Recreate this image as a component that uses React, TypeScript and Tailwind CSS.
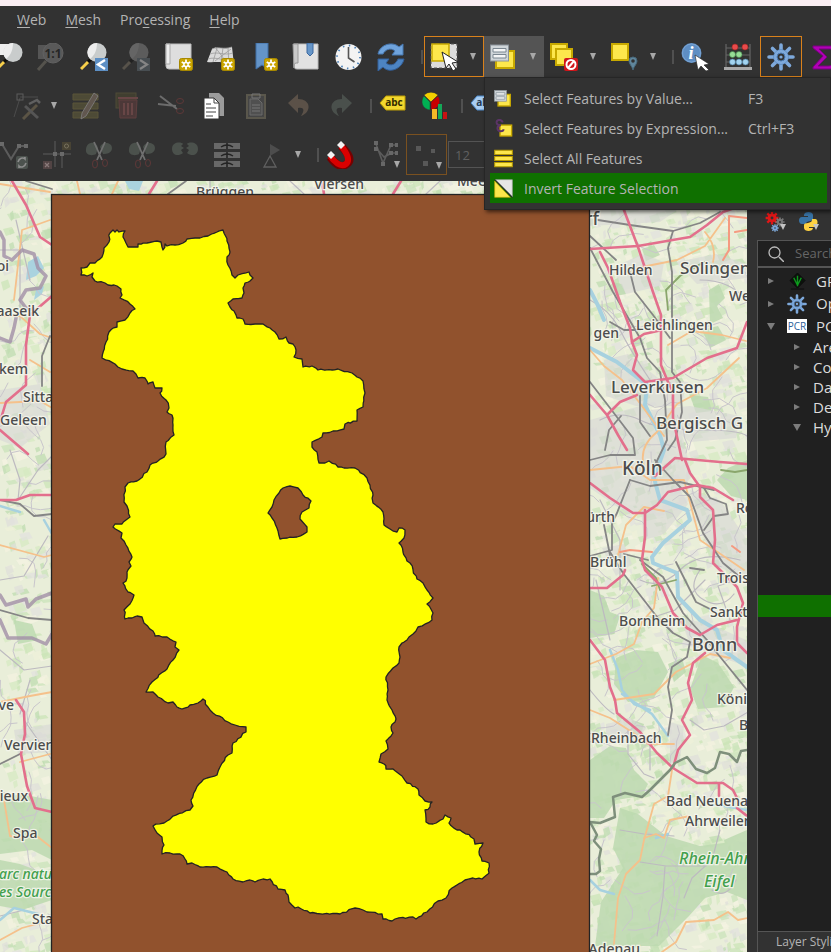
import type { ReactNode } from "react";

const ui = "font-['Open_Sans','Noto_Sans',sans-serif]";

/* ---------- icon parts ---------- */

function Icon({ children, size = 28 }: { children: ReactNode; size?: number }) {
  return (
    <svg width={size} height={size} viewBox="0 0 28 28" className="shrink-0" aria-hidden="true">
      {children}
    </svg>
  );
}

function Star({ x = 14, y = 15 }: { x?: number; y?: number }) {
  return (
    <g transform={`translate(${x} ${y})`}>
      <rect x="0.5" y="0.5" width="13" height="12" rx="2" fill="#c9a400" stroke="#a78800" />
      <path d="M7 1.500v10M2.700 4l8.600 5M11.300 4L2.700 9" stroke="#fff" strokeWidth="1.800" />
      <circle cx="7" cy="6.500" r="2.800" fill="#fff" />
      <circle cx="7" cy="6.500" r="1.300" fill="#c9a400" />
    </g>
  );
}

function Lens({ dim = false }: { dim?: boolean }) {
  return (
    <g>
      <path d="M10 17L1 26" stroke={dim ? "#57524a" : "#f7cf4a"} strokeWidth="3" />
      <path d="M11 16l-3 3" stroke={dim ? "#222" : "#0c0c0c"} strokeWidth="3.500" />
      <circle cx="17" cy="9.500" r="9.500" fill={dim ? "#5c5c5c" : "#c9cccc"} />
      <path d="M17 0a9.500 9.500 0 0 0-7 16c4-3 7-8 7-16z" fill={dim ? "#666" : "#f1f1f1"} opacity="0.900" />
    </g>
  );
}

const icons: Record<string, ReactNode> = {
  zoomLayer: (
    <>
      <rect x="2" y="1" width="12" height="11" fill="#eee" />
      <g transform="translate(1 0)">
        <Lens />
      </g>
    </>
  ),
  zoomNative: (
    <>
      <rect x="1" y="2" width="13" height="14" fill="#565656" />
      <path d="M9 18L1 27" stroke="#55534d" strokeWidth="3" />
      <circle cx="16" cy="10" r="10" fill="#595959" stroke="#626262" />
      <text x="16" y="15" textAnchor="middle" fontSize="12" fontWeight="700" fill="#262626" className="font-['Open_Sans',sans-serif]">
        1:1
      </text>
    </>
  ),
  zoomLast: (
    <>
      <Lens />
      <rect x="15" y="15" width="13" height="13" fill="#5d8fc4" />
      <path d="M25 17l-7 4.500 7 4.500" fill="none" stroke="#fff" strokeWidth="2.400" />
    </>
  ),
  zoomNext: (
    <>
      <Lens dim />
      <rect x="15" y="15" width="13" height="13" fill="#484e52" />
      <path d="M18 17l7 4.500-7 4.500" fill="none" stroke="#858585" strokeWidth="2.200" />
    </>
  ),
  newLayout: (
    <>
      <path d="M2 1h24v25H4a3 3 0 0 1-3-3V1z" fill="#dedede" stroke="#bdbdbd" />
      <path d="M1 1h4v20H1z" fill="#eee" stroke="#aaa" />
      <Star />
    </>
  ),
  newMap3d: (
    <>
      <path d="M5 6c6-3 11 1 20-2l2 18-8 0C14 17 8 20 0 19z" fill="#dadada" />
      <path d="M10 5L6 19M16 5l-2 14M21 5l1 17M3 11c8-3 14 2 23-1M1 16c8-3 16 3 25 0M5 6c6-3 11 1 20-2M8 4l12 16M24 6L8 18" fill="none" stroke="#9b9b9b" strokeWidth="0.800" />
      <Star />
    </>
  ),
  newBookmark: (
    <>
      <path d="M6 0h12v26l-6-4-6 4z" fill="#6494c8" stroke="#3f6ea6" />
      <Star x={14} y={15} />
    </>
  ),
  bookmarks: (
    <>
      <path d="M2 1h24v25H5c-2 0-3-1-3-3z" fill="#e2e2e2" stroke="#bbb" />
      <path d="M1 1h5v19H4c-2 0-2 3-2 5z" fill="#c9c9c9" stroke="#999" />
      <path d="M15 0h6v10l-3 3-3-3z" fill="#6796c8" stroke="#3c69a0" />
    </>
  ),
  clock: (
    <>
      <circle cx="13.500" cy="14" r="13" fill="#f3f3f3" />
      <circle cx="13.500" cy="14" r="11.500" fill="none" stroke="#4b80b8" strokeWidth="1.800" strokeDasharray="1.500 4.520" />
      <path d="M13.500 4v11l6 4" fill="none" stroke="#555" strokeWidth="1.600" />
    </>
  ),
  refresh: (
    <>
      <path d="M1 11C3 1 16-2 22 4l4-3v11H15l3-4c-5-4-10-1-12 3z" fill="#6fa3dc" stroke="#4778b2" />
      <path d="M27 16c-2 10-15 15-21 8l-5 4V16h11l-3 4c5 4 10 1 12-4z" fill="#4d84c2" stroke="#325f99" />
    </>
  ),
  selectRect: (
    <>
      <rect x="1" y="1" width="26" height="24" fill="#dcdcdc" stroke="#555" strokeDasharray="3 2" />
      <rect x="2" y="1" width="17" height="17" fill="#fde74c" stroke="#c8a900" strokeWidth="1.500" />
      <path d="M12 9l16 10-6 1 4 6-3 2-4-7-3 4z" fill="#fff" stroke="#222" />
    </>
  ),
  selectForm: (
    <>
      <rect x="6" y="8" width="18" height="17" fill="#fde74c" stroke="#c8a900" strokeWidth="2" />
      <rect x="0.5" y="2" width="18" height="16" fill="#cfd5d9" stroke="#8a9299" />
      <path d="M3 5.500h13v3.500H3zM3 11.500h13v3.500H3z" fill="#f4f5f6" stroke="#7b8791" />
    </>
  ),
  deselect: (
    <>
      <rect x="1" y="1" width="16" height="15" fill="#fde74c" stroke="#c8a900" strokeWidth="2" />
      <rect x="6" y="6" width="16" height="16" fill="#fde74c" stroke="#c8a900" strokeWidth="2" />
      <rect x="14" y="15" width="14" height="13" rx="2" fill="#d0161b" />
      <circle cx="21" cy="21.500" r="4.500" fill="#d0161b" stroke="#fff" strokeWidth="2" />
      <path d="M18 25l6-7" stroke="#fff" strokeWidth="2" />
    </>
  ),
  selectLocation: (
    <>
      <rect x="2" y="1" width="16" height="16" fill="#fde74c" stroke="#c8a900" strokeWidth="2" />
      <path d="M23 27c-1-4-4-6-4-9a4 4 0 0 1 8 0c0 3-3 5-4 9z" fill="#60869c" stroke="#48697c" />
      <circle cx="23" cy="18" r="1.800" fill="#323232" />
    </>
  ),
  identify: (
    <>
      <circle cx="10.500" cy="10" r="10" fill="#5e8ec3" />
      <circle cx="10.500" cy="10" r="9" fill="none" stroke="#79a4d3" />
      <text x="10" y="16" textAnchor="middle" fontSize="18" fontWeight="700" fontStyle="italic" fill="#fff" className="font-['Liberation_Serif',serif]">
        i
      </text>
      <path d="M14 12l14 9-5 1 5 5-3 1-5-5-3 4z" fill="#fff" stroke="#222" strokeWidth="0.600" />
    </>
  ),
  abacus: (
    <>
      <path d="M2 1v23M26 1v23M2 5h24M2 12h24M2 19h24" stroke="#666" strokeWidth="1.200" />
      <rect x="0" y="24" width="28" height="3" fill="#a9a9a9" />
      <g fill="#e84b4b" stroke="#a32020" strokeWidth="0.600">
        <circle cx="11" cy="4" r="3" /><circle cx="21" cy="4" r="3" />
      </g>
      <g fill="#97dc97" stroke="#428a49" strokeWidth="0.600">
        <circle cx="8.500" cy="11.500" r="3" /><circle cx="15" cy="11.500" r="3" />
      </g>
      <g fill="#a2d3ef" stroke="#47799c" strokeWidth="0.600">
        <circle cx="8.500" cy="19" r="3" /><circle cx="15" cy="19" r="3" /><circle cx="21.500" cy="19" r="3" />
      </g>
    </>
  ),
  gear: (
    <>
      <g stroke="#7ea9db" strokeWidth="3.600" strokeLinecap="round">
        <path d="M14 2v24M2 14h24M5.500 5.500l17 17M22.500 5.500l-17 17" />
      </g>
      <circle cx="14" cy="14" r="7.500" fill="#7ea9db" stroke="#4c7cb4" strokeWidth="0.500" />
      <circle cx="14" cy="14" r="4" fill="#323232" stroke="#4c7cb4" strokeWidth="1" />
      <circle cx="14" cy="14" r="1.600" fill="#7ea9db" />
    </>
  ),
  sigma: <path d="M3 3h22v6h-2c-1-3-2-3-5-3H9l8 8-9 9h10c3 0 5-1 6-4h2l-2 7H3v-2l10-11L3 5z" fill="#b100b5" stroke="#780080" />,

  /* digitising row */
  vertexTool: (
    <>
      <path d="M7 6L1 25M7 5h18" stroke="#4c4c4c" fill="none" />
      <rect x="4" y="2" width="6" height="6" fill="none" stroke="#5c5c5c" />
      <path d="M10 27l14-14" stroke="#5b5445" strokeWidth="3" />
      <path d="M12 14l13 12" stroke="#555" strokeWidth="3" />
      <path d="M16 12l8-4 3 3" stroke="#606060" strokeWidth="2.500" fill="none" />
    </>
  ),
  editing: (
    <>
      <path d="M1 2h25v6H1zM1 11h25v6H1zM1 20h25v6H1z" fill="#4d4a36" stroke="#5a5539" />
      <path d="M22 1l4 3-12 20-5 3 1-6z" fill="#61574f" stroke="#808080" strokeWidth="0.800" />
    </>
  ),
  trash: (
    <>
      <rect x="1" y="1" width="20" height="15" fill="#403e30" stroke="#4f4b37" />
      <path d="M4 8h18l-1 18H5z" fill="#4c3838" stroke="#5e3f3f" />
      <path d="M3 6h20M9 11v12M13 11v12M17 11v12" stroke="#684646" strokeWidth="2" />
    </>
  ),
  cut: (
    <>
      <path d="M1 12l18 2M3 4l17 13" stroke="#6c6c6c" strokeWidth="2" />
      <ellipse cx="23" cy="9" rx="3.500" ry="2.500" fill="none" stroke="#5e3838" />
      <ellipse cx="23" cy="19" rx="3.500" ry="2.500" fill="none" stroke="#5e3838" />
    </>
  ),
  copy: (
    <>
      <path d="M9 1h10l5 5v18H9z" fill="#9b9b9b" />
      <path d="M4 6h10l5 5v16H4z" fill="#fff" stroke="#333" />
      <path d="M14 6v5h5M6 12h5M6 16h10M6 20h10M6 24h7" fill="none" stroke="#444" />
    </>
  ),
  paste: (
    <>
      <rect x="5" y="3" width="18" height="23" fill="#454545" stroke="#5a574c" strokeWidth="2" />
      <path d="M8 7h8l4 4v12H8z" fill="#505050" stroke="#6b6b6b" />
      <path d="M10 13h8M10 16h8M10 19h8M10 2h8v4h-8z" fill="none" stroke="#777" />
    </>
  ),
  undo: <path d="M3 11l10-9v5c13 0 14 13 3 17 4-6 3-9-3-8v5z" fill="#5b5148" />,
  redo: <path d="M25 11L15 2v5C2 7 1 20 12 24c-4-6-3-9 3-8v5z" fill="#4a504c" />,
  label: (
    <>
      <path d="M1 11l6-7h19v14H7z" fill="#f2d72e" stroke="#bd9d05" />
      <text x="15" y="14" textAnchor="middle" fontSize="10" fontWeight="700" fill="#332b00" className="font-['Open_Sans',sans-serif]">
        abc
      </text>
    </>
  ),
  labelBlue: (
    <>
      <path d="M1 11l6-7h19v14H7z" fill="#a9cef4" stroke="#4c88c8" />
      <text x="15" y="14" textAnchor="middle" fontSize="10" fontWeight="700" fill="#263a55" className="font-['Open_Sans',sans-serif]">
        abc
      </text>
    </>
  ),
  diagram: (
    <>
      <path d="M10 10L3 3a10 10 0 0 1 14 0z" fill="#f3cf00" stroke="#333" strokeWidth="0.500" />
      <path d="M9 10L3 4c-4 5-2 13 6 14z" fill="#00b153" stroke="#333" strokeWidth="0.500" />
      <path d="M10 10l7-6c4 5 1 13-7 14z" fill="#c80000" stroke="#333" strokeWidth="0.500" />
      <path d="M11 17h5v10h-5z" fill="#f4ba27" /><path d="M17 12h4v15h-4z" fill="#14a858" /><path d="M22 20h4v7h-4z" fill="#c81313" />
    </>
  ),

  /* advanced digitising row */
  nodes: (
    <>
      <path d="M2 3l9 15 8-13h8" stroke="#5c5c5c" strokeWidth="2" fill="none" />
      <path d="M0 1h4v4H0zM17 3h4v4h-4zM24 3h4v4h-4z" fill="#6a6a6a" />
      <rect x="16" y="15" width="12" height="13" rx="2" fill="#4c524e" />
      <path d="M18 21c1-4 5-5 7-3v-2M26 22c-1 4-5 5-7 3v2" stroke="#8d8d8d" fill="none" strokeWidth="1.600" />
    </>
  ),
  trim: (
    <>
      <path d="M0 13h28M12 0v26M19 13v14" stroke="#4f4f4f" strokeWidth="1.500" />
      <path d="M10 11h4v4h-4zM17 11h4v4h-4z" fill="#6a6a6a" />
      <rect x="0" y="20" width="9" height="8" fill="#524444" />
      <path d="M2 22l4 4M6 22l-4 4" stroke="#8a7a7a" strokeWidth="1.300" />
      <rect x="19" y="1" width="9" height="8" fill="#484334" />
      <circle cx="23.500" cy="5" r="2" fill="none" stroke="#78725f" />
    </>
  ),
  split: (
    <>
      <path d="M1 8c1-8 11-8 12-1l-2 6C8 15 0 15 1 8zM15 6c2-6 12-5 12 1 0 5-5 6-9 6z" fill="#4b514c" />
      <path d="M9 1l8 18M20 1l-8 18" stroke="#707070" strokeWidth="1.800" />
      <ellipse cx="10" cy="23" rx="2.500" ry="4" fill="none" stroke="#5e3838" /><ellipse cx="20" cy="22" rx="2.500" ry="3.500" fill="none" stroke="#5e3838" />
    </>
  ),
  merge: <path d="M1 8C1 0 11 1 12 3l-2 2 3 2-3 2 2 3c-5 4-11 2-11-4zm26 0c0-8-10-7-11-5l2 2-3 2 3 2-2 3c5 4 11 2 11-4z" fill="#4b514c" />,
  mergeAttributes: (
    <>
      <path d="M1 2h12v6H1zM15 2h12v6H15zM1 11h12v6H1zM15 11h12v6H15zM1 20h12v6H1zM15 20h12v6H15z" fill="#686868" />
      <path d="M8 6q6-4 12 0M8 15q6-4 12 0M8 24q6-4 12 0" stroke="#242424" fill="none" strokeWidth="1.500" />
    </>
  ),
  rotate: (
    <>
      <path d="M14 3l10 6-10 6z" fill="#4d4d4d" />
      <path d="M14 15l6 11H8z" fill="none" stroke="#606060" strokeWidth="1.300" />
    </>
  ),
  magnet: (
    <>
      <path d="M4 16c7 9 12 11 17 7s2-10-6-18" fill="none" stroke="#750000" strokeWidth="8" />
      <path d="M4 15c7 9 12 11 16 8s2-10-5-18" fill="none" stroke="#d90000" strokeWidth="6" />
      <path d="M1 14l4-4 4 4-4 4zM11 4l4-4 4 4-4 4z" fill="#f2f2f2" />
    </>
  ),
  vertexSnap: (
    <>
      <path d="M3 3l7 19L18 4h7M4 8l7 8 7-4h7M11 16l8-4" stroke="#5c5c5c" fill="none" strokeWidth="1.600" />
      <path d="M1 0h4v4H1zM16 2h4v4h-4zM22 2h3v4h-3zM16 10h4v4h-4zM22 10h3v4h-3zM1 6h4v4H1zM8 21h4v4H8z" fill="#676767" />
    </>
  ),
  points: <path d="M5 5h5v5H5zM20 8h4v4h-4zM12 20h5v5h-5z" fill="#585858" />,

  /* menu icons */
  expression: (
    <>
      <rect x="9" y="9" width="17" height="16" fill="#fde74c" stroke="#c8a900" strokeWidth="2" />
      <path d="M13 5C10-1 3 1 4 6c1 4 6 3 6 3-6 0-7 9 0 9 3 0 4-2 4-3" fill="none" stroke="#5b3466" strokeWidth="3" />
    </>
  ),
  selectAll: <path d="M1 2h26v6H1zM1 11h26v6H1zM1 20h26v6H1z" fill="#fde74c" stroke="#b79a00" strokeWidth="1.500" />,
  invert: (
    <>
      <path d="M2 1h25v25z" fill="#e6e6e6" stroke="#a8a8a8" />
      <path d="M1 3v24h23z" fill="#fde74c" stroke="#c8a900" />
      <path d="M1 1l26 26" stroke="#2b2b2b" strokeWidth="1.500" />
    </>
  ),
};

/* ---------- tool bars ---------- */

function Tool({ icon, label }: { icon: string; label: string }) {
  return (
    <button type="button" aria-label={label} className="flex h-[41px] w-[42px] shrink-0 items-center justify-center">
      <Icon>{icons[icon]}</Icon>
    </button>
  );
}

function Arrow() {
  return (
    <svg width="6" height="7" viewBox="0 0 6 7" className="shrink-0" aria-hidden="true">
      <path d="M0 0h6L3 7z" fill="#a8a8a8" />
    </svg>
  );
}

function Split({ icon, label, frame = "border-transparent" }: { icon: string; label: string; frame?: string }) {
  return (
    <button type="button" aria-label={label} className={`flex h-[41px] w-[60px] shrink-0 items-center justify-between border pr-[7px] pl-[5px] ${frame}`}>
      <Icon>{icons[icon]}</Icon>
      <Arrow />
    </button>
  );
}

function Divider() {
  return <span className="h-3.5 w-[2px] shrink-0 bg-[#505050]" />;
}

const menuItems = [
  { icon: "selectForm", text: "Select Features by Value...", keys: "F3" },
  { icon: "expression", text: "Select Features by Expression...", keys: "Ctrl+F3" },
  { icon: "selectAll", text: "Select All Features", keys: "" },
  { icon: "invert", text: "Invert Feature Selection", keys: "", active: true },
];

function SelectMenu() {
  return (
    <div role="menu" className="absolute top-[41px] left-0 z-20 w-[347px] border border-[#262626] bg-[#323232] pt-[5px] pr-[3px] pb-1.5 pl-[5px] shadow-[2px_2px_4px_rgba(0,0,0,0.6)]">
      {menuItems.map((m) => (
        <button key={m.text} type="button" role="menuitem" className={`flex h-[30px] w-full items-center pl-1 text-left ${m.active ? "bg-[#0f7000]" : ""}`}>
          <span className="w-[30px]">
            <Icon size={19}>{icons[m.icon]}</Icon>
          </span>
          <span className="w-56 whitespace-nowrap">{m.text}</span>
          <span>{m.keys}</span>
        </button>
      ))}
    </div>
  );
}

function Header() {
  return (
    <header className="shrink-0 border-t-[6px] border-[#faeef3] bg-[#323232] pb-1.5">
      <nav className="mb-1 flex h-[26px] items-center gap-[19px] pl-[17px] text-[14px] text-[#b4b4b4]">
        <button type="button"><u className="underline-offset-2">W</u>eb</button>
        <button type="button"><u className="underline-offset-2">M</u>esh</button>
        <button type="button">Pro<u className="underline-offset-2">c</u>essing</button>
        <button type="button"><u className="underline-offset-2">H</u>elp</button>
      </nav>
      <div className="flex flex-col gap-2">
        <div className="flex items-center">
          <div className="-ml-3 flex w-[424px] shrink-0 justify-between">
            <Tool icon="zoomLayer" label="Zoom to layer" />
            <Tool icon="zoomNative" label="Zoom to native resolution" />
            <Tool icon="zoomLast" label="Zoom last" />
            <Tool icon="zoomNext" label="Zoom next" />
            <Tool icon="newLayout" label="New map view" />
            <Tool icon="newMap3d" label="New 3D map view" />
            <Tool icon="newBookmark" label="New spatial bookmark" />
            <Tool icon="bookmarks" label="Show bookmarks" />
            <Tool icon="clock" label="Temporal controller" />
            <Tool icon="refresh" label="Refresh" />
          </div>
          <div className="flex w-3 shrink-0 justify-end pr-px"><Divider /></div>
          <Split icon="selectRect" label="Select features" frame="border-[#d9811b]" />
          <div className="relative shrink-0 text-[14px] text-[#b4b4b4]">
            <Split icon="selectForm" label="Select by value" frame="border-[#545454] bg-[#545454]" />
            <SelectMenu />
          </div>
          <Split icon="deselect" label="Deselect features" />
          <Split icon="selectLocation" label="Select by location" />
          <div className="flex w-2.5 shrink-0 justify-end"><Divider /></div>
          <div className="flex shrink-0 gap-px">
            <Tool icon="identify" label="Identify features" />
            <Tool icon="abacus" label="Field calculator" />
            <div className="border border-[#d9811b]">
              <div className="-m-px"><Tool icon="gear" label="Toolbox" /></div>
            </div>
            <Tool icon="sigma" label="Statistical summary" />
          </div>
        </div>
        <div className="flex items-center pl-1.5">
          <Tool icon="vertexTool" label="Vertex tool" />
          <span className="flex w-[17px] shrink-0 pl-[3px]"><Arrow /></span>
          <div className="flex w-[297px] shrink-0 justify-between">
            <Tool icon="editing" label="Edit attributes" />
            <Tool icon="trash" label="Delete selected" />
            <Tool icon="cut" label="Cut features" />
            <Tool icon="copy" label="Copy features" />
            <Tool icon="paste" label="Paste features" />
            <Tool icon="undo" label="Undo" />
            <Tool icon="redo" label="Redo" />
          </div>
          <div className="flex w-2.5 shrink-0 justify-end"><Divider /></div>
          <Tool icon="label" label="Labeling options" />
          <Tool icon="diagram" label="Diagram options" />
          <div className="flex w-[7px] shrink-0 justify-end"><Divider /></div>
          <Tool icon="labelBlue" label="Pin labels" />
        </div>
        <div className="flex items-center">
          <div className="-ml-[7px] flex w-[298px] shrink-0 justify-between">
            <Tool icon="nodes" label="Rotate feature" />
            <Tool icon="trim" label="Trim or extend" />
            <Tool icon="split" label="Split features" />
            <Tool icon="split" label="Split parts" />
            <Tool icon="merge" label="Merge features" />
            <Tool icon="mergeAttributes" label="Merge attributes" />
            <Tool icon="rotate" label="Rotate symbols" />
          </div>
          <span className="flex w-[26px] shrink-0 pl-1"><Arrow /></span>
          <Divider />
          <Tool icon="magnet" label="Enable snapping" />
          <button type="button" aria-label="Snapping layers" className="flex h-[41px] w-[45px] shrink-0 items-center pl-3">
            <Icon>{icons.vertexSnap}</Icon>
            <span className="-ml-[7px] self-end pb-[7px]"><Arrow /></span>
          </button>
          <button type="button" aria-label="Snapping type" className="flex h-[41px] w-[41px] shrink-0 items-center border border-[#7a5120] pl-1">
            <Icon>{icons.points}</Icon>
            <span className="-ml-[3px] self-end pb-[5px]"><Arrow /></span>
          </button>
          <input aria-label="Snapping tolerance" defaultValue="12" className="ml-px h-[27px] w-20 shrink-0 border border-[#545454] bg-transparent pl-1.5 text-[13px] text-[#606060]" />
        </div>
      </div>
    </header>
  );
}

/* ---------- map ---------- */

function random(seed: number) {
  let s = seed;
  return () => {
    s = (s * 16807) % 2147483647;
    return s / 2147483647;
  };
}

type Pt = [number, number];

function parse(s: string): Pt[] {
  return s.trim().split(/\s+/).map((p) => p.split(",").map(Number) as Pt);
}

/* Adds small wiggles along a boundary so that it reads as a river basin outline. */
function rough(points: string, seed: number): string {
  const r = random(seed);
  const p = parse(points);
  const out: string[] = [];
  p.forEach(([x, y], i) => {
    const [nx, ny] = p[(i + 1) % p.length];
    const n = Math.max(1, Math.round(Math.hypot(nx - x, ny - y) / 3.5));
    for (let k = 0; k < n; k++) {
      const t = k / n;
      const j = k === 0 ? 0 : 1.8;
      out.push(`${(x + (nx - x) * t + (r() - 0.5) * j).toFixed(1)},${(y + (ny - y) * t + (r() - 0.5) * j).toFixed(1)}`);
    }
  });
  return `M${out.join("L")}Z`;
}

const basin = rough(
  `113,230 115,232 117,230 119,232 125,231 123,237 126,243 128,247 133,247 138,247 138,244 147,243 157,241 161,242 162,247 163,250 165,244 167,246 175,245 183,243 187,239 195,238 200,238 208,236 217,232 223,230 225,235 227,241 230,252 227,257 228,265 232,275 235,278 238,275 249,272 250,275 253,278 250,281 245,283 243,288 244,293 242,298 233,299 228,303 230,307 234,311 237,318 243,319 245,324 255,324 263,324 270,328 275,332 279,339 286,337 289,343 293,344 296,350 294,357 302,359 303,367 312,366 318,370 338,369 352,373 357,377 363,381 365,393 363,407 357,410 357,421 345,424 344,429 333,431 323,433 322,437 312,442 312,447 317,452 319,463 325,463 329,461 338,467 355,468 367,478 373,495 373,503 383,512 384,525 390,529 397,532 399,528 405,530 404,538 399,543 403,552 407,561 410,563 417,579 423,583 427,590 433,598 427,604 433,613 432,620 418,627 413,634 409,637 407,640 402,643 399,647 400,657 399,663 393,668 386,677 388,690 387,700 392,710 396,719 391,727 393,733 386,741 388,749 381,754 379,762 384,764 386,769 393,769 402,776 407,783 418,789 419,795 425,801 432,802 430,807 425,810 426,822 433,824 443,819 445,815 451,818 449,823 457,830 460,830 474,839 475,844 483,843 479,852 482,861 489,863 489,873 482,879 473,878 465,880 452,888 446,898 438,901 427,912 416,919 413,917 395,919 392,921 383,919 382,914 367,912 363,910 355,908 340,914 310,913 298,907 295,908 289,902 288,895 285,890 278,889 270,879 263,879 255,882 250,880 243,882 233,879 227,872 217,867 200,867 192,863 187,864 185,859 180,854 170,853 162,854 164,845 162,837 157,833 153,826 167,821 173,816 190,810 193,806 191,800 199,784 207,778 217,775 220,767 228,755 232,753 233,743 246,732 246,727 235,725 228,722 213,713 208,707 203,699 198,703 190,705 182,709 177,707 173,702 168,703 158,697 153,692 146,692 152,682 167,669 173,660 179,650 175,647 176,642 167,637 155,636 153,631 144,623 142,617 137,616 132,618 125,619 124,610 130,604 134,595 128,592 123,583 127,578 127,572 131,566 129,562 132,557 126,545 121,538 122,533 113,527 115,524 122,524 126,520 130,517 127,506 124,502 125,487 128,483 137,481 147,472 150,465 158,461 166,454 166,442 174,435 173,425 172,415 167,412 169,408 166,400 160,393 162,388 155,388 153,382 148,384 145,378 138,378 133,371 122,369 115,364 102,358 106,342 109,332 117,327 117,322 125,320 130,313 135,309 130,304 120,298 122,295 121,289 117,286 108,285 105,283 95,281 92,277 93,273 87,276 81,275 81,268 87,267 90,263 95,263 102,257 104,248 109,242 110,233`,
  11,
);
const hole = rough("283,488 290,486 298,488 303,495 311,501 309,508 302,512 300,519 307,527 307,532 297,537 280,539 277,528 272,518 268,513 272,507 274,500 279,493", 5);

/* Land cover: scattered woods, fields and built-up patches. */
function landPatches() {
  const r = random(77);
  const tones = ["#d6eac2", "#cbe4b7", "#dfdfda", "#f4f3e2", "#bfdcb0", "#eef0d8", "#c9e3b9", "#e2e2de", "#f3f2df"];
  const list: ReactNode[] = [];
  for (let i = 0; i < 2600; i++) {
    const zone = r();
    const strip = zone >= 0.2 && zone < 0.27;
    const x = zone < 0.2 ? r() * 54 : strip ? r() * 590 : 588 + r() * 160;
    const y = strip ? 180 + r() * 16 : 180 + r() * 772;
    const w = 2 + r() * 9;
    const h = 2 + r() * 6;
    const d = `M${x.toFixed(0)} ${y.toFixed(0)}l${w.toFixed(1)} ${(-h / 3).toFixed(1)}l${(w / 3).toFixed(1)} ${h.toFixed(1)}l${(-w).toFixed(1)} ${(h / 2).toFixed(1)}z`;
    list.push(<path key={i} d={d} fill={tones[Math.floor(r() * tones.length)]} opacity="0.750" />);
  }
  return list;
}

/* Country lanes wandering across the uncovered parts of the map. */
function lanes() {
  const r = random(409);
  let d = "";
  for (let i = 0; i < 150; i++) {
    const left = i % 4 === 0;
    const x = left ? r() * 50 : 592 + r() * 150;
    const y = 200 + r() * 740;
    d += `M${x.toFixed(0)} ${y.toFixed(0)}`;
    let a = r() * 6.3;
    for (let k = 0; k < 5; k++) {
      a += (r() - 0.5) * 1.6;
      d += `l${(Math.cos(a) * 8).toFixed(1)} ${(Math.sin(a) * 8).toFixed(1)}`;
    }
  }
  return d;
}

const forests = [
  "M709 290l10-6 6 14-8 8 6 12-13 6z", "M702 330l16-4 8 14-16 8z", "M690 395l18 2 4 14-16 2z", "M728 468l19-8v40l-16-4-14-16z", "M642 249l12-4 6 10-14 6zM612 282l10 2 4 10-10 2z",
  "M590 590l14 6 6 16 10 4-6 18-24 4z", "M616 658l20-8 22 2 10 20-14 26-26 4-14-18z", "M668 664l14-6 4 14-12 10z", "M702 655l16 8 16 24-10 20-26 2-8-20z",
  "M590 760l20-14 16 2 8 22 14 14-6 12-26 4-12 18h-14z", "M620 808l18 6 28 22 34 10 47-6v60l-20-8-22 6-16 18-30 30h-64l6-44 22-34-10-20z",
  "M0 800l20-6 32 6v60l-20-10-32 4z", "M0 860l20 4 32 12v24l-30 10-22-4z", "M14 620l18 4 6 16-20 4z", "M724 840l23-10v34l-16 4z", "M632 720l12 4-4 14-10-4z",
];
const towns = [
  "M612 268l30-14 22 8-4 24-34 8z", "M676 262l40-8 31 10v14l-50 6z", "M604 360l24-6 30 24 30 4-8 24-44 0-30-10z", "M590 420l50-14 40 20 12 50-24 30-40 8-38-26z",
  "M650 410l40-4 50 10-4 22-46 4z", "M602 548l22-4 8 20-16 12z", "M680 618l30 6 36 16v26l-30-10-26-12z", "M606 724l24-6 16 10-10 14-30 2z", "M670 722l14 4-4 34-10 4z", "M0 390l40-6 10 40-30 24-20-8z", "M14 730l38-6v28l-34 2z", "M590 186l40 14 50 8-20 14-70 4z",
  "M690 490l30 10 27 40v40l-30-14-14-30z", "M640 500l40-10 8 14-24 30-20 6z",
];
const orange = [
  "M637 268l40-8 28-14 20-28M705 232q12 14 8 30M645 470q-8-22 12-38l20-28 30-16 32-30M668 345l24-14 30 4 24 6M590 350l14 16 18 14 20 26 22 30",
  "M590 664l26-10 18-10 8-22 12-14 4-30M614 700l40-6 22-22 34-18 20 4M590 710l20 8 22 14 16 12 26 0M672 770l-4 26-14 8-10 36 -4 20-14 14-8 24-4 46",
  "M644 838l12-4 8 4 6-18 20-4M662 952l14-10 10-20 28-2 14-8 10 8 10-2M590 470l40-4 20 14 34 0 8 30 8 30 44 30M618 555l8-30 18-18 20 4",
  "M0 184l50 8M77 181l3 13M112 194l6-13M14 300l8-70 28-10M0 316h20l20 18 12 4M30 360l20 12M0 403l40-2 14 8M0 545l44 12 8-2M0 702l30-6 22-4M20 762l30-8M4 800l6 36 14 2M34 834l18 14M0 940l22-12 30-8",
];
const pink = [
  "M622 205L638 247L653 292L661 315V365L668 382L673 392V418L682 460", "M590 249L638 246L690 237L707 225L723 212L740 206",
  "M600 252L608 268L620 302L630 328L632 342L637 355L633 370L645 382L673 378L707 358L737 348L747 322", "M590 395L607 415L618 435L627 450M607 415L620 402L637 395M632 342l12-8 18-4",
  "M655 476l20-18 45 4 27 2", "M590 483L610 498L633 513H645L657 505L668 492L697 485L713 488L733 500", "M685 460L690 473L700 487V497L713 510L715 540L713 563L727 577L737 587L743 603L737 627V643L747 653",
  "M645 510V537L642 560L645 570L662 587L673 613L687 628L700 635L717 625L737 620", "M705 653L693 663L688 683L692 700L682 720L690 735L678 750L673 768",
  "M590 588h17l16-13 2-5", "M590 640L605 660L610 687L615 700L617 713L640 732L657 753L673 768L697 783H723L733 790L737 798M719 784v12M737 808l10 8",
  "M12 181l14 24 14 32 12 8M52 296L30 315l-4 30v40L6 402 0 422M0 430l28 24M0 500h16l14-5h22M16 700l8 12 1 22-4 20 6 32 8 22 17 4M401 181l-8 13M322 181l2 13M157 181l-8 13",
];
const rail = [
  "M590 248L613 292L640 338L647 358L660 372L665 400L667 440L655 465M590 236l26 24", "M598 220L630 225L673 231L700 223L720 212", "M673 231L668 248L672 272V372L680 382L682 412L675 440L668 450",
  "M630 272L635 292L653 315L670 338M610 322l14 8h16", "M590 382L610 408L633 438L635 455H610L590 460M605 450l4-20 12-14M640 396v26l10 14", "M630 480L617 513L612 523V550L590 556M604 525l6 30",
  "M630 480l20 6 30-4 34 8M655 460L673 480L690 497L703 533L723 563L740 577", "M610 552L623 573L657 617L673 633L690 642L687 657L672 667L668 687L672 710L668 735",
  "M640 560L663 577L683 613L707 640L717 653L747 690M624 554l24 6", "M704 530l10-14 14-2-2-10-16-6-6-10M676 562l10 20 10 20 16 8M690 568l14 2",
  "M26 181l26 8M50 336l-8 20v30M0 500l20 4 14 12 18-2M0 610l28 8 24 2M0 764l20-10M168 194l18-13",
];
const minor =
  "M590 300q20 10 30 30t30 50M600 420q20-10 40 0t60 10 47 6M640 580q20 10 40-10t60-10M700 570q-14 20 4 30t30-6M590 690q16 20 24 24M628 730l0 24 16 20 10 4M650 740l0 30M690 720l14 10 20-4 24-14M620 830l24 4 30 2M640 862l26 4 40 0M665 866l-2 30-6 40M720 830l-8 30-20 18-8 20M736 880q-10 20-24 10M700 280q30 0 46 20M600 500l20 40 0 50M596 580l14 60M645 620l30-10 30-30M0 250h20v70M16 220l14 60 M10 450l10 30-2 20 20-30 14-14M0 580l24-4 24-40M0 650l24 20 28-4M30 680l-10 34M24 720l28 40M0 916l24-6 28 10M210 181v13M290 181l14 13M440 181l-14 13M730 620l-12-34 30-10";
const border = "M0 232l4 8v16l8 4 10-10 12 4 4 14 8 8-6 12-14 2-6 10 6 8 10 2M0 338l10 4 4-14 2-10M0 595l6 10 20-6 2 8 8-8 16-6M0 620l8 18 24 0 14 6 6-10";
const water = [
  "M590 290q8 14 14 30", "M590 348L617 362L647 385L645 405L660 435L664 450L654 478L660 500L687 510L690 520L663 543L652 557L653 563L677 573L678 597L700 620L717 630L723 650L747 667",
];

type Town = { t: string; x: number; y: number; s?: number; green?: boolean; end?: boolean };
const labels: Town[] = [
  { t: "oi", x: 9, y: 271, end: true }, { t: "aaseik", x: 39, y: 316, end: true }, { t: "kem", x: 28, y: 374, end: true }, { t: "Sittard", x: 23, y: 402 },
  { t: "Geleen", x: 0, y: 425 }, { t: "ve", x: 14, y: 710, end: true }, { t: "Verviers", x: 4, y: 750 }, { t: "ieux", x: 28, y: 801, end: true }, { t: "Spa", x: 13, y: 838 },
  { t: "arc natu", x: -1, y: 879, green: true }, { t: "es Sourc", x: -1, y: 897, green: true }, { t: "Stav", x: 32, y: 924 },
  { t: "Brüggen", x: 196, y: 197 }, { t: "Viersen", x: 314, y: 189 }, { t: "Meerbusch", x: 457, y: 186 },
  { t: "rf", x: 599, y: 225, s: 18, end: true }, { t: "Hilden", x: 609, y: 275 }, { t: "Solingen", x: 680, y: 274, s: 17 }, { t: "We", x: 729, y: 301 },
  { t: "Leichlingen", x: 636, y: 330 }, { t: "gen", x: 619, y: 338, end: true }, { t: "Leverkusen", x: 611, y: 393, s: 17 }, { t: "Bergisch G", x: 656, y: 429, s: 17 },
  { t: "Köln", x: 622, y: 475, s: 19 }, { t: "Rö", x: 736, y: 513 }, { t: "ürth", x: 615, y: 522, end: true }, { t: "Brühl", x: 590, y: 567 }, { t: "Troisdorf", x: 717, y: 583 },
  { t: "Sankt", x: 710, y: 617 }, { t: "Bornheim", x: 619, y: 626 }, { t: "Bonn", x: 692, y: 651, s: 18 }, { t: "König", x: 717, y: 704 }, { t: "B", x: 739, y: 730 },
  { t: "Rheinbach", x: 591, y: 743 }, { t: "Bad Neuena", x: 666, y: 806 }, { t: "Ahrweiler", x: 685, y: 826 },
  { t: "Rhein-Ahr", x: 679, y: 864, s: 16, green: true }, { t: "Eifel", x: 704, y: 887, s: 16, green: true }, { t: "Adenau", x: 640, y: 954, end: true },
];

function MapCanvas() {
  return (
    <main className="min-w-0 flex-1 overflow-hidden">
      <svg viewBox="0 181 747 771" preserveAspectRatio="xMinYMin slice" className="block h-full w-full" role="img" aria-label="Map canvas">
        <rect y="180" width="747" height="775" fill="#e9eed9" />
        {landPatches()}
        <g fill="#bddab0" opacity="0.850">{forests.map((d) => <path key={d} d={d} />)}</g>
        <g fill="#d9d9d6" opacity="0.650">{towns.map((d) => <path key={d} d={d} />)}</g>
        <path d="M28 262l10-6 6 12-8 8-10 4zM36 290l8-4-2 8-8 6zM125 181l18 0-4 10-10-2z" fill="#aad3df" />
        <g fill="none" strokeLinejoin="round" strokeLinecap="round">
          <path d={lanes()} stroke="#c9c6cc" strokeWidth="1" />
          <path d={minor} stroke="#bdbac0" strokeWidth="1.200" />
          <g stroke="#a7d1df" strokeWidth="4">{water.map((d) => <path key={d} d={d} />)}</g>
          <path d="M590 880l10 10 14 4M656 838l12-4M610 650l8 20 4 20 12 14 16 6M0 506l20 6M44 520l8 14M712 804l35 6M0 920l14-12 24 6M622 694l30 20 16 22" stroke="#a7d1df" strokeWidth="2.500" />
          <g stroke="#f5c18b" strokeWidth="1.800">{orange.map((d) => <path key={d} d={d} />)}</g>
          <path d="M747 218l-18-2 0 34-6 10M747 230l-12 2M620 552l10-2 22 2M740 552l-8-6" stroke="#f59a80" strokeWidth="2" />
          <path d="M747 470l-12 2-14-2M652 586l24-6M642 564l14 14 4 12M668 310l-2-20 14-14 24-14" stroke="#8aa66c" strokeWidth="1.800" />
          <path d={border} stroke="#a18fa6" strokeWidth="3.500" opacity="0.800" />
          <g stroke="#858585" strokeWidth="1.800">{rail.map((d) => <path key={d} d={d} />)}</g>
          <g stroke="#e36f8c" strokeWidth="2.600">{pink.map((d) => <path key={d} d={d} />)}</g>
          <path d="M590 822L600 823L615 817L613 797L625 793L642 797L650 790L670 770L675 763L687 757L696 769L707 773L715 768L720 752L729 754L737 762L741 751L747 750M590 822l7 13-3 6 7 8-2 10 1 12-4 3-6 0" stroke="#7e8f7b" strokeWidth="2.500" />
        </g>
        <g stroke="#f6f7ee" strokeWidth="2.500" strokeOpacity="0.850" paintOrder="stroke" className="font-['Noto_Sans','Open_Sans',sans-serif]">
          {labels.map((l) => (
            <text key={l.t} x={l.x} y={l.y} fontSize={l.s ?? 14} textAnchor={l.end ? "end" : "start"} fill={l.green ? "#42a04d" : "#4c4c4c"} fontStyle={l.green ? "italic" : "normal"} fontWeight={500}>
              {l.t}
            </text>
          ))}
        </g>
        <rect x="51.500" y="194.500" width="538" height="800" fill="#91522d" stroke="#232323" strokeWidth="1.300" />
        <path d={`${basin}${hole}`} fill="#ffff00" fillRule="evenodd" stroke="#232323" strokeWidth="1.300" strokeLinejoin="round" />
      </svg>
    </main>
  );
}

/* ---------- processing toolbox ---------- */

function Twisty({ open = false }: { open?: boolean }) {
  return (
    <svg width="8" height="8" viewBox="0 0 8 8" className="shrink-0" aria-hidden="true">
      <path d={open ? "M0 1h8L4 8z" : "M1 1l6 3-6 3z"} fill="#7c7c7c" />
    </svg>
  );
}

function Gear({ x, y, r, fill }: { x: number; y: number; r: number; fill: string }) {
  return (
    <g transform={`translate(${x} ${y}) scale(${r / 12})`} stroke={fill}>
      <path d="M0-11v22M-11 0h22M-8-8L8 8M8-8L-8 8" strokeWidth="4" />
      <circle r="5" fill="#323232" strokeWidth="5" />
    </g>
  );
}

function Toolbox() {
  return (
    <aside className="flex w-[84px] shrink-0 flex-col overflow-hidden bg-[#323232] pl-2.5 text-[15px] text-[#dcdcdc]">
      <div className="flex h-[59px] shrink-0 items-end gap-3 pb-2 pl-2">
        <button type="button" aria-label="Models" className="flex shrink-0 items-end">
          <svg width="22" height="20" viewBox="0 0 22 20">
            <Gear x={7} y={6} r={7} fill="#df1717" />
            <Gear x={15} y={10} r={5} fill="#777" />
            <Gear x={10} y={16} r={4} fill="#7ea9db" />
            <path d="M15 12h6l-3 6z" fill="#c4c4c4" />
          </svg>
        </button>
        <button type="button" aria-label="Scripts" className="flex shrink-0 items-end">
          <svg width="22" height="20" viewBox="0 0 22 20">
            <path d="M5 3c0-4 9-4 9 0v4c0 3-7 1-7 5H3C-1 12-1 5 3 5h6V4H5z" fill="#3873a5" />
            <path d="M14 16c0 4-9 4-9 0v-3c0-3 8-1 8-5V7h3c4 0 3 8-1 8h-5v1z" fill="#fdd141" />
            <path d="M14 12h6l-3 6z" fill="#c4c4c4" />
          </svg>
        </button>
      </div>
      <div className="flex min-h-0 flex-1 flex-col border-t border-l border-[#555] bg-[#202020]">
        <label className="flex h-[27px] shrink-0 items-center gap-[11px] border-b-2 border-[#555] pl-2.5">
          <svg width="16" height="16" viewBox="0 0 16 16" className="shrink-0" aria-hidden="true">
            <circle cx="6.500" cy="6.500" r="5.500" fill="none" stroke="#bbb" strokeWidth="1.300" />
            <path d="M11 11l5 5" stroke="#bbb" strokeWidth="1.500" />
          </svg>
          <input aria-label="Search" placeholder="Search…" className="w-24 shrink-0 bg-transparent text-[13px] placeholder:text-[#666]" />
        </label>
        <ul className="pt-[2px] whitespace-nowrap">
          <li className="flex h-[22px] items-center pl-[9px]">
            <Twisty />
            <span className="ml-3 flex w-[29px] shrink-0 justify-start pl-0.5">
              <svg width="17" height="17" viewBox="0 0 18 18" aria-hidden="true">
                <path d="M9 0l8 8-8 8-8-8z" fill="#0c120c" stroke="#0c0c0c" />
                <path d="M9 14V3M9 13L5 5M9 13l4-8" stroke="#0c9a1c" strokeWidth="1.500" fill="none" />
                <path d="M2 17h14" stroke="#0c0c0c" />
              </svg>
            </span>
            GRASS
          </li>
          <li className="flex h-[23px] items-center pl-[9px]">
            <Twisty />
            <span className="ml-3 w-[29px] shrink-0"><Icon size={20}>{icons.gear}</Icon></span>
            OpenDroneMap
          </li>
          <li className="flex h-[22px] items-center pl-[9px]">
            <Twisty open />
            <span className="ml-3 w-[29px] shrink-0">
              <span className="flex h-3.5 w-5 items-center justify-center bg-white text-[10px] text-[#2d5f9b]">PCR</span>
            </span>
            PCRaster
          </li>
          {["Areal operations", "Coordinates", "Data management", "Derivatives", "Hydrological"].map((t, i) => (
            <li key={t} className="flex h-5 items-center gap-3 pl-[35px]">
              <Twisty open={i === 4} />
              {t}
            </li>
          ))}
          <li className="mt-[158px] h-[22px] bg-[#0f7000]" />
        </ul>
      </div>
      <div className="flex h-[21px] shrink-0 items-center border-t border-l border-[#555] pl-[18px] text-[12px] whitespace-nowrap text-[#b4b4b4]">Layer Styling</div>
    </aside>
  );
}

export default function App() {
  return (
    <div className={`flex h-screen flex-col overflow-hidden bg-[#323232] ${ui}`}>
      <Header />
      <div className="flex min-h-0 flex-1">
        <MapCanvas />
        <Toolbox />
      </div>
    </div>
  );
}
